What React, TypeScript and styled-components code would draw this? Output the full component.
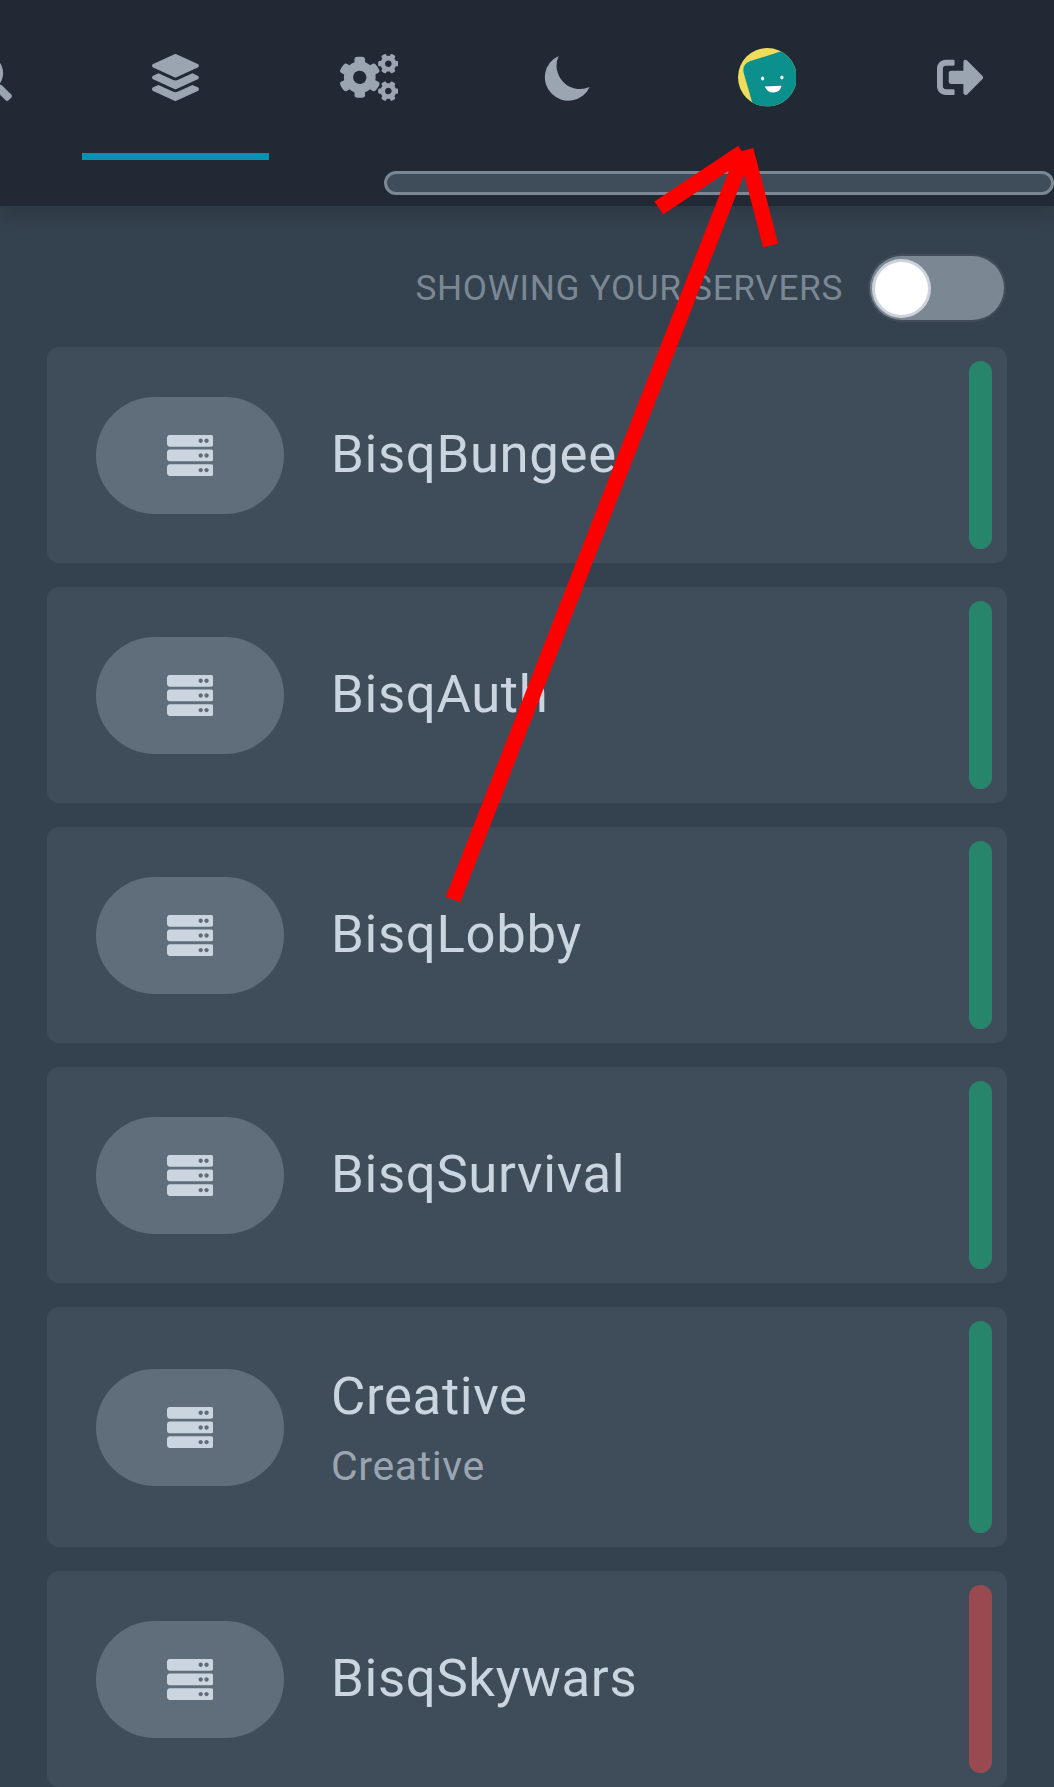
import React from "react";
import styled, { createGlobalStyle } from "styled-components";
import { FaCogs, FaLayerGroup, FaSearch, FaServer, FaSignOutAlt } from "react-icons/fa";

const GlobalStyle = createGlobalStyle`
  *, *::before, *::after { box-sizing: border-box; }
  html, body { margin: 0; background: #34414e; overflow: hidden; }
  body { font-family: Roboto, "Liberation Sans", sans-serif; }
`;

const Page = styled.div`
  position: relative;
  width: 1054px;
  height: 1787px;
  overflow: hidden;
  display: flex;
  flex-direction: column;
  background: #34414e;
`;

const Header = styled.header`
  flex: none;
  height: 206px;
  background: #202934;
  box-shadow: 0 6px 20px rgba(0, 0, 0, 0.17);
`;

const Nav = styled.nav`
  display: flex;
  justify-content: flex-end;
  height: 160px;
`;

const NavItem = styled.a<{ $active?: boolean }>`
  flex: none;
  display: flex;
  align-items: center;
  padding: 2px 70.25px 6.5px;
  height: 160px;
  color: #9aa5b1;
  box-shadow: ${(p) => (p.$active ? "inset 0 -7px #0891b2" : "none")};

  svg { display: block; }
`;

const CogsIcon = styled(FaCogs)`
  width: 58.6px;
  height: 46.9px;
`;

const ScrollTrack = styled.div`
  display: flex;
  justify-content: flex-end;
  padding-top: 11px;
`;

const ScrollThumb = styled.div`
  width: 670.5px;
  height: 23.5px;
  border: 3px solid #7b8793;
  border-radius: 12px;
  background: #3f4d5a;
`;

const Content = styled.main`
  flex: none;
  padding: 50px 47px 0;
`;

const FilterBar = styled.div`
  display: flex;
  justify-content: flex-end;
  align-items: center;
  height: 64px;
  margin-bottom: 27px;
  padding-right: 3px;
`;

const FilterLabel = styled.p`
  margin: 0 27px 0 0;
  font-size: 35.2px;
  line-height: 47px;
  letter-spacing: 0.67px;
  text-transform: uppercase;
  white-space: nowrap;
  color: #7b8793;
`;

const Toggle = styled.div`
  width: 134px;
  height: 64px;
  padding: 2.5px 2px;
  border-radius: 32px;
  background: #7b8793;
  box-shadow: 0 0 0 2px #414e5a;
`;

const Knob = styled.div`
  width: 59px;
  height: 59px;
  border: 3px solid #cbd2d9;
  border-radius: 50%;
  background: #fff;
`;

const ServerList = styled.div`
  display: flex;
  flex-direction: column;
  gap: 24px;
`;

const ServerRow = styled.a<{ $tall: boolean }>`
  display: flex;
  align-items: center;
  height: ${(p) => (p.$tall ? 240 : 216)}px;
  padding: 14.4px 15px 14.4px 49.3px;
  border-radius: 12px;
  background: #3f4d5a;
`;

const IconPill = styled.div`
  flex: none;
  display: flex;
  align-items: center;
  justify-content: center;
  width: 187.5px;
  height: 117px;
  margin-right: 47.2px;
  border-radius: 59px;
  background: #606d7a;
  color: #cbd5e0;
`;

const ServerInfo = styled.div<{ $lowered: boolean }>`
  flex: 1;
  padding-top: ${(p) => (p.$lowered ? 2 : 0)}px;
`;

const ServerName = styled.p`
  margin: 0;
  padding-bottom: 3px;
  font-size: 52.7px;
  line-height: 72px;
  letter-spacing: 0.66px;
  color: #cbd5e0;
`;

const ServerNote = styled.p`
  margin: 0;
  font-size: 41px;
  line-height: 62px;
  letter-spacing: 0.6px;
  color: #9aa5b1;
`;

const StatusBar = styled.div<{ $online: boolean }>`
  align-self: stretch;
  width: 23.5px;
  border-radius: 12px;
  background: ${(p) => (p.$online ? "#27856b" : "#994a50")};
`;

const Pointer = styled.svg`
  position: absolute;
  left: 0;
  top: 0;
  pointer-events: none;
`;

const Moon = () => (
  <svg width="58.6" height="58.6" viewBox="0 0 20 20" fill="currentColor">
    <path d="M17.293 13.293A8 8 0 016.707 2.707a8.001 8.001 0 1010.586 10.586z" />
  </svg>
);

const Avatar = () => (
  <svg width="58.6" height="58.6" viewBox="0 0 59 59">
    <defs>
      <clipPath id="face">
        <circle cx="29.5" cy="29.5" r="29.5" />
      </clipPath>
    </defs>
    <g clipPath="url(#face)">
      <rect width="59" height="59" fill="#f0db5a" />
      <path d="M66-4 L12.5 13.2 Q3.6 16.5 5.8 25.5 L15.5 59 H66Z" fill="#0b908d" />
      <ellipse cx="24.8" cy="30.7" rx="1.6" ry="2" fill="#fff" />
      <ellipse cx="44.2" cy="29.7" rx="1.6" ry="2" fill="#fff" />
      <path d="M27 38.7 L43.8 38 Q42.4 44.6 35.6 44.8 Q29.4 44.9 27 38.7Z" fill="#fff" />
    </g>
  </svg>
);

const servers = [
  { name: "BisqBungee", online: true },
  { name: "BisqAuth", online: true },
  { name: "BisqLobby", online: true },
  { name: "BisqSurvival", online: true },
  { name: "Creative", note: "Creative", online: true },
  { name: "BisqSkywars", online: false },
];

export default function App() {
  return (
    <Page>
      <GlobalStyle />
      <Header>
        <Nav>
          <NavItem><FaSearch size={46.9} /></NavItem>
          <NavItem $active><FaLayerGroup size={46.9} /></NavItem>
          <NavItem><CogsIcon /></NavItem>
          <NavItem><Moon /></NavItem>
          <NavItem><Avatar /></NavItem>
          <NavItem><FaSignOutAlt size={46.9} /></NavItem>
        </Nav>
        <ScrollTrack><ScrollThumb /></ScrollTrack>
      </Header>
      <Content>
        <FilterBar>
          <FilterLabel>Showing your servers</FilterLabel>
          <Toggle><Knob /></Toggle>
        </FilterBar>
        <ServerList>
          {servers.map((s) => (
            <ServerRow key={s.name} $tall={!!s.note}>
              <IconPill><FaServer size={46.9} /></IconPill>
              <ServerInfo $lowered={!!s.note}>
                <ServerName>{s.name}</ServerName>
                {s.note && <ServerNote>{s.note}</ServerNote>}
              </ServerInfo>
              <StatusBar $online={s.online} />
            </ServerRow>
          ))}
        </ServerList>
      </Content>
      <Pointer width="1054" height="1787" viewBox="0 0 1054 1787" fill="none" stroke="#f00" strokeWidth="15.5">
        <path d="M453 899.5 L744.5 152" />
        <path d="M658.8 208 L742.5 152.3" />
        <path d="M770.7 245.5 L745.8 150" />
      </Pointer>
    </Page>
  );
}
